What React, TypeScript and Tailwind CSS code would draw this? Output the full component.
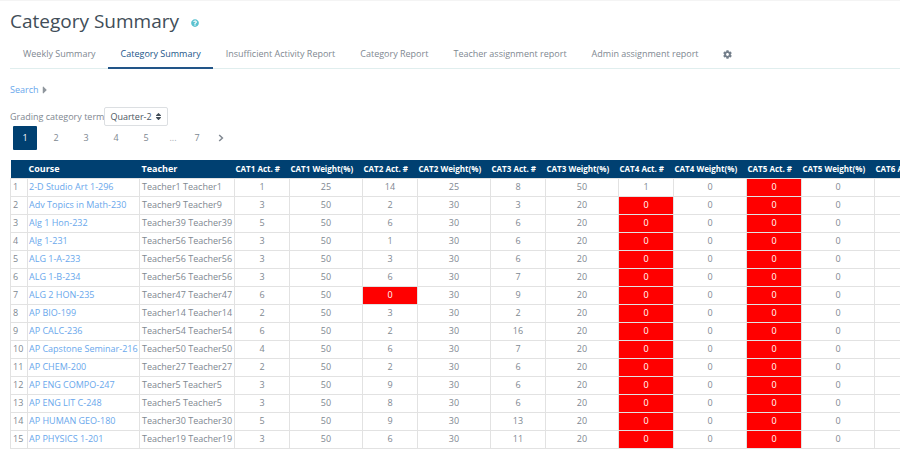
import { useState } from "react";
import { FaCaretRight, FaCog, FaQuestionCircle, FaSort } from "react-icons/fa";

const tabs = [
  "Weekly Summary",
  "Category Summary",
  "Insufficient Activity Report",
  "Category Report",
  "Teacher assignment report",
  "Admin assignment report",
];

type Row = { course: string; teacher: string; values: (number | null)[] };

const rows: Row[] = [
  { course: "2-D Studio Art 1-296", teacher: "Teacher1 Teacher1", values: [1, 25, 14, 25, 8, 50, 1, 0, 0, 0, null] },
  { course: "Adv Topics in Math-230", teacher: "Teacher9 Teacher9", values: [3, 50, 2, 30, 3, 20, 0, 0, 0, 0, null] },
  { course: "Alg 1 Hon-232", teacher: "Teacher39 Teacher39", values: [5, 50, 6, 30, 6, 20, 0, 0, 0, 0, null] },
  { course: "Alg 1-231", teacher: "Teacher56 Teacher56", values: [3, 50, 1, 30, 6, 20, 0, 0, 0, 0, null] },
  { course: "ALG 1-A-233", teacher: "Teacher56 Teacher56", values: [3, 50, 3, 30, 6, 20, 0, 0, 0, 0, null] },
  { course: "ALG 1-B-234", teacher: "Teacher56 Teacher56", values: [3, 50, 6, 30, 7, 20, 0, 0, 0, 0, null] },
  { course: "ALG 2 HON-235", teacher: "Teacher47 Teacher47", values: [6, 50, 0, 30, 9, 20, 0, 0, 0, 0, null] },
  { course: "AP BIO-199", teacher: "Teacher14 Teacher14", values: [2, 50, 3, 30, 2, 20, 0, 0, 0, 0, null] },
  { course: "AP CALC-236", teacher: "Teacher54 Teacher54", values: [6, 50, 2, 30, 16, 20, 0, 0, 0, 0, null] },
  { course: "AP Capstone Seminar-216", teacher: "Teacher50 Teacher50", values: [4, 50, 6, 30, 7, 20, 0, 0, 0, 0, null] },
  { course: "AP CHEM-200", teacher: "Teacher27 Teacher27", values: [2, 50, 2, 30, 6, 20, 0, 0, 0, 0, null] },
  { course: "AP ENG COMPO-247", teacher: "Teacher5 Teacher5", values: [3, 50, 9, 30, 6, 20, 0, 0, 0, 0, null] },
  { course: "AP ENG LIT C-248", teacher: "Teacher5 Teacher5", values: [3, 50, 8, 30, 6, 20, 0, 0, 0, 0, null] },
  { course: "AP HUMAN GEO-180", teacher: "Teacher30 Teacher30", values: [5, 50, 9, 30, 13, 20, 0, 0, 0, 0, null] },
  { course: "AP PHYSICS 1-201", teacher: "Teacher19 Teacher19", values: [3, 50, 6, 30, 11, 20, 0, 0, 0, 0, null] },
];

const categoryHeads = [
  "CAT1 Act. #", "CAT1 Weight(%)",
  "CAT2 Act. #", "CAT2 Weight(%)",
  "CAT3 Act. #", "CAT3 Weight(%)",
  "CAT4 Act. #", "CAT4 Weight(%)",
  "CAT5 Act. #", "CAT5 Weight(%)",
  "CAT6 Act. #",
];

const isCount = (column: number) => column % 2 === 0;

function Tabs() {
  return (
    <nav aria-label="Reports" className="flex border-b border-[#e0eeee]">
      {tabs.map((tab) => (
        <a
          key={tab}
          href="#"
          aria-current={tab === "Category Summary" ? "page" : undefined}
          className={
            tab === "Category Summary"
              ? "-mb-px border-b-2 border-[#225588] pt-2 pr-3 pb-[5px] pl-[13px] text-[#225588]"
              : "pt-2 pr-3 pb-[5px] pl-[13px]"
          }
        >
          {tab}
        </a>
      ))}
      <button type="button" aria-label="Settings" className="flex items-center px-3 pt-[3px] text-[#747f8b]">
        <FaCog size={9} />
      </button>
    </nav>
  );
}

function Pager() {
  const [page, setPage] = useState("1");
  return (
    <nav aria-label="Pages" className="flex h-6 items-stretch pl-[3px]">
      {["1", "2", "3", "4", "5"].map((n) => (
        <button
          key={n}
          type="button"
          onClick={() => setPage(n)}
          className={n === page ? "mr-1 w-6 rounded-[1px] bg-[#004071] text-white" : "w-[30px]"}
        >
          {n}
        </button>
      ))}
      <span className="w-6 self-center text-center text-[#a6adb5]">...</span>
      <button type="button" onClick={() => setPage("7")} className="w-6">7</button>
      <button type="button" aria-label="Next page" className="flex w-6 items-center justify-center">
        <svg width="6" height="8" viewBox="0 0 6 8" fill="none" stroke="currentColor" strokeWidth="1.5">
          <path d="M1.2 1 4.4 4 1.2 7" />
        </svg>
      </button>
    </nav>
  );
}

function SummaryTable() {
  return (
    <div className="overflow-x-hidden">
      <table className="w-[919px] table-fixed border-collapse">
        <colgroup>
          <col className="w-[17px]" />
          <col className="w-[112px]" />
          <col className="w-[95px]" />
          {categoryHeads.map((head, i) => (
            <col key={head} className={isCount(i) ? "w-[55px]" : "w-[73px]"} />
          ))}
        </colgroup>
        <thead className="bg-[#004071] text-white">
          <tr className="h-[18px]">
            <th aria-label="Row" />
            <th className="px-px text-left font-bold">Course</th>
            <th className="px-0.5 text-left font-bold">Teacher</th>
            {categoryHeads.map((head) => (
              <th key={head} className="px-px text-left text-[8px] font-bold whitespace-nowrap">{head}</th>
            ))}
          </tr>
        </thead>
        <tbody>
          {rows.map((row, r) => (
            <tr key={row.course} className="h-[18px]">
              <td className="border border-[#e2e2e2] px-0.5">{r + 1}</td>
              <td className="border border-[#e2e2e2] px-px whitespace-nowrap">
                <a href="#" className="text-[#69a7ec]">{row.course}</a>
              </td>
              <td className="border border-[#e2e2e2] px-0.5 whitespace-nowrap">{row.teacher}</td>
              {row.values.map((value, i) => (
                <td
                  key={categoryHeads[i]}
                  className={
                    isCount(i) && value === 0
                      ? "border border-[#e2e2e2] bg-[#ff0000] text-center text-white"
                      : "border border-[#e2e2e2] text-center"
                  }
                >
                  {value}
                </td>
              ))}
            </tr>
          ))}
        </tbody>
      </table>
    </div>
  );
}

export default function App() {
  return (
    <main className="overflow-hidden border-t border-[#f4f4f4] bg-white pl-2.5 font-['Open_Sans',sans-serif] text-[9px] leading-4 text-[#808891]">
      <header className="flex items-center gap-3 pt-2 pb-[5px]">
        <h1 className="text-[19px] leading-6 text-[#414d58]">Category Summary</h1>
        <button type="button" aria-label="Help" className="pt-[3px] text-[#5bc2d0]">
          <FaQuestionCircle size={8} />
        </button>
      </header>
      <Tabs />
      <section className="pt-[13px]">
        <button type="button" className="flex items-center text-[#69a7ec]">
          Search
          <FaCaretRight size={12} className="text-[#8f969d]" />
        </button>
        <div className="flex items-center pt-[9px]">
          <label htmlFor="term">Grading category term</label>
          <div className="relative">
            <select
              id="term"
              defaultValue="Quarter-2"
              className="block h-[19px] w-16 appearance-none rounded-xs border border-[#dcdfe2] bg-white pl-[5px] text-[#4d565f]"
            >
              <option>Quarter-1</option>
              <option>Quarter-2</option>
            </select>
            <FaSort size={9} className="pointer-events-none absolute top-[5px] right-[5px] text-[#414d58]" />
          </div>
        </div>
        <Pager />
      </section>
      <div className="pt-2.5">
        <SummaryTable />
      </div>
    </main>
  );
}
